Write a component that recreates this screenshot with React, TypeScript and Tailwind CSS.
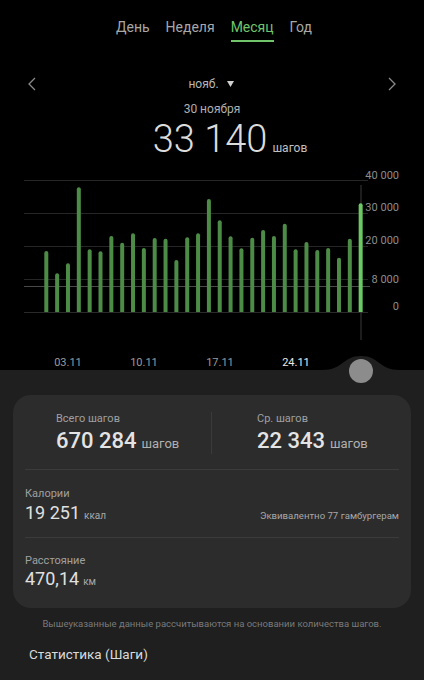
import React from 'react'

const bars = [
  61, 38.7, 48.7, 124.7, 62.7, 60.7, 76, 69.3, 78.7, 64, 74, 73.3, 52, 74.7, 78.7,
  113, 91.7, 75.7, 63.7, 74.3, 82, 76, 88.3, 62.7, 70, 62, 64, 54.3, 73.3, 108.7,
]

const BASE = 142

const Chevron: React.FC<{ dir: 'left' | 'right' }> = ({ dir }) => (
  <svg width="10" height="16" viewBox="0 0 10 16">
    <polyline
      points={dir === 'left' ? '8,2 2,8 8,14' : '2,2 8,8 2,14'}
      fill="none"
      stroke="#8a8a8a"
      strokeWidth="1.3"
    />
  </svg>
)

const Chart: React.FC = () => {
  const grid = [10, 43, 76, 109]
  const labels = [
    { y: 9, t: '40 000' },
    { y: 41, t: '30 000' },
    { y: 74, t: '20 000' },
    { y: 113, t: '8 000' },
    { y: 140, t: '0' },
  ]
  const dates = [
    { x: 68, t: '03.11', c: '#9a9a9a' },
    { x: 144, t: '10.11', c: '#9a9a9a' },
    { x: 220, t: '17.11', c: '#9a9a9a' },
    { x: 296, t: '24.11', c: '#e8e8e8' },
  ]
  return (
    <svg width="424" height="200" viewBox="0 0 424 200" className="block overflow-visible">
      {grid.map((y) => (
        <line key={y} x1="24" x2="368" y1={y + 0.5} y2={y + 0.5} stroke="#262626" strokeWidth="1" />
      ))}
      <line x1="24" x2="370" y1="116.5" y2="116.5" stroke="#4a4a4a" strokeWidth="1" />
      <line x1="24" x2="368" y1={BASE + 0.5} y2={BASE + 0.5} stroke="#2a2a2a" strokeWidth="1" />
      <line x1="361" x2="361" y1="15" y2="170" stroke="#3a3a3a" strokeWidth="1" />
      {bars.map((h, i) => {
        const cx = 46.3 + i * 10.84
        const last = i === bars.length - 1
        const x = cx - 2
        const top = BASE - h
        return (
          <path
            key={i}
            d={`M${x},${BASE} L${x},${top + 2} Q${x},${top} ${x + 2},${top} Q${x + 4},${top} ${x + 4},${top + 2} L${x + 4},${BASE} Z`}
            fill={last ? '#6cc862' : '#4d8c47'}
          />
        )
      })}
      {labels.map((l) => (
        <text key={l.t} x="399" y={l.y} textAnchor="end" fontSize="11" fill="#8c8c8c" fontFamily="Roboto, sans-serif">
          {l.t}
        </text>
      ))}
      {dates.map((d) => (
        <text key={d.t} x={d.x} y="196" textAnchor="middle" fontSize="11" fill={d.c} fontFamily="Roboto, sans-serif">
          {d.t}
        </text>
      ))}
    </svg>
  )
}

export default function App() {
  const tabs = ['День', 'Неделя', 'Месяц', 'Год']
  return (
    <div className="w-[424px] h-[680px] overflow-hidden bg-black font-['Roboto',sans-serif] text-[#e6e6e6]">
      {/* Header */}
      <div className="h-[170px] flex flex-col">
        <div className="flex justify-center gap-[16px] pt-[17px] pl-[4px]">
          {tabs.map((t) => (
            <div key={t} className="flex flex-col items-center">
              <span className={`text-[14px] leading-[20px] ${t === 'Месяц' ? 'text-[#72c46a]' : 'text-[#a8a8a8]'}`}>{t}</span>
              <div className={`mt-[3px] h-[2px] w-full ${t === 'Месяц' ? 'bg-[#72c46a]' : 'bg-transparent'}`} />
            </div>
          ))}
        </div>
        <div className="mt-[32px] h-[20px] px-[27px] grid grid-cols-[auto_1fr_auto] items-center">
          <Chevron dir="left" />
          <div className="flex items-center justify-center gap-[8px] pr-[2px] text-[12px] text-[#b8b8b8]">
            <span>нояб.</span>
            <svg width="7" height="6" viewBox="0 0 7 6">
              <polygon points="0,0 7,0 3.5,6" fill="#d0d0d0" />
            </svg>
          </div>
          <Chevron dir="right" />
        </div>
        <div className="mt-[7px] text-center text-[12px] leading-[16px] text-[#b0b0b0]">30 ноября</div>
        <div className="mt-[2px] flex items-baseline justify-center gap-[5px] pl-[36px]">
          <span className="text-[38px] leading-[40px] font-light text-[#dcdcdc]">33 140</span>
          <span className="text-[12px] text-[#c0c0c0]">шагов</span>
        </div>
      </div>

      <Chart />

      {/* Sheet */}
      <div className="relative h-[310px] bg-[#1f1f1f]">
        <svg width="424" height="32" viewBox="0 0 424 32" className="absolute left-0 top-[-16px] overflow-visible">
          <path d="M322,16 C344,16 342,2 361,2 C380,2 378,16 400,16 Z" fill="#1f1f1f" />
          <circle cx="361" cy="17" r="12" fill="#8c8c8c" />
        </svg>

        <div className="pt-[25px] px-[13px]">
          <div className="rounded-[18px] bg-[#2c2c2c] px-[12px]">
            <div className="flex border-b border-[#3b3b3b] pt-[17px] pb-[15px]">
              <div className="w-1/2 pl-[31px] border-r border-[#3b3b3b]">
                <div className="text-[11px] leading-[14px] text-[#a0a0a0]">Всего шагов</div>
                <div className="mt-[2px] flex items-baseline gap-[5px]">
                  <span className="text-[22px] leading-[26px] font-medium text-[#e4e4e4]">670 284</span>
                  <span className="text-[13px] text-[#b0b0b0]">шагов</span>
                </div>
              </div>
              <div className="w-1/2 pl-[45px]">
                <div className="text-[11px] leading-[14px] text-[#a0a0a0]">Ср. шагов</div>
                <div className="mt-[2px] flex items-baseline gap-[5px]">
                  <span className="text-[22px] leading-[26px] font-medium text-[#e4e4e4]">22 343</span>
                  <span className="text-[13px] text-[#b0b0b0]">шагов</span>
                </div>
              </div>
            </div>

            <div className="border-b border-[#3b3b3b] pt-[17px] pb-[13px]">
              <div className="text-[11px] leading-[14px] text-[#a0a0a0]">Калории</div>
              <div className="mt-[1px] flex items-baseline justify-between">
                <div className="flex items-baseline gap-[4px]">
                  <span className="text-[18px] leading-[22px] text-[#e0e0e0]">19 251</span>
                  <span className="text-[10px] text-[#a8a8a8]">ккал</span>
                </div>
                <span className="text-[9.6px] text-[#a8a8a8]">Эквивалентно 77 гамбургерам</span>
              </div>
            </div>

            <div className="pt-[16px] pb-[18px]">
              <div className="text-[11px] leading-[14px] text-[#a0a0a0]">Расстояние</div>
              <div className="flex items-baseline gap-[4px]">
                <span className="text-[18px] leading-[22px] text-[#e0e0e0]">470,14</span>
                <span className="text-[10px] text-[#a8a8a8]">км</span>
              </div>
            </div>
          </div>
        </div>

        <div className="mt-[9px] text-center text-[9.5px] leading-[14px] text-[#7a7a7a]">
          Вышеуказанные данные рассчитываются на основании количества шагов.
        </div>
        <div className="mt-[13px] pl-[29px] text-[13.5px] leading-[20px] text-[#dadada]">Статистика (Шаги)</div>
      </div>
    </div>
  )
}
